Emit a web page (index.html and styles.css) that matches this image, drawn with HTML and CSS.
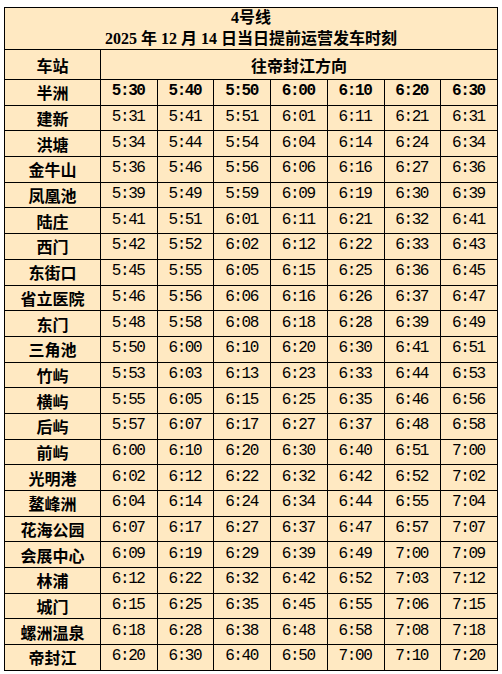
FILE: index.html
```html
<!DOCTYPE html>
<html lang="zh-CN">
<head>
<meta charset="utf-8">
<title>4号线 发车时刻</title>
<link rel="stylesheet" href="styles.css">
</head>
<body>
<div class="page">
<table class="tt">
<colgroup><col class="c-st"><col><col><col><col><col><col><col></colgroup>
<thead>
<tr class="r-title"><th colspan="8"><div>4号线</div><div>2025 年 12 月 14 日当日提前运营发车时刻</div></th></tr>
<tr class="r-head"><th class="st">车站</th><th colspan="7" class="dir">往帝封江方向</th></tr>
</thead>
<tbody>
<tr class="r-first"><th class="st">半洲</th><td>5:30</td><td>5:40</td><td>5:50</td><td>6:00</td><td>6:10</td><td>6:20</td><td>6:30</td></tr>
<tr><th class="st">建新</th><td>5:31</td><td>5:41</td><td>5:51</td><td>6:01</td><td>6:11</td><td>6:21</td><td>6:31</td></tr>
<tr><th class="st">洪塘</th><td>5:34</td><td>5:44</td><td>5:54</td><td>6:04</td><td>6:14</td><td>6:24</td><td>6:34</td></tr>
<tr><th class="st">金牛山</th><td>5:36</td><td>5:46</td><td>5:56</td><td>6:06</td><td>6:16</td><td>6:27</td><td>6:36</td></tr>
<tr><th class="st">凤凰池</th><td>5:39</td><td>5:49</td><td>5:59</td><td>6:09</td><td>6:19</td><td>6:30</td><td>6:39</td></tr>
<tr><th class="st">陆庄</th><td>5:41</td><td>5:51</td><td>6:01</td><td>6:11</td><td>6:21</td><td>6:32</td><td>6:41</td></tr>
<tr><th class="st">西门</th><td>5:42</td><td>5:52</td><td>6:02</td><td>6:12</td><td>6:22</td><td>6:33</td><td>6:43</td></tr>
<tr><th class="st">东街口</th><td>5:45</td><td>5:55</td><td>6:05</td><td>6:15</td><td>6:25</td><td>6:36</td><td>6:45</td></tr>
<tr><th class="st">省立医院</th><td>5:46</td><td>5:56</td><td>6:06</td><td>6:16</td><td>6:26</td><td>6:37</td><td>6:47</td></tr>
<tr><th class="st">东门</th><td>5:48</td><td>5:58</td><td>6:08</td><td>6:18</td><td>6:28</td><td>6:39</td><td>6:49</td></tr>
<tr><th class="st">三角池</th><td>5:50</td><td>6:00</td><td>6:10</td><td>6:20</td><td>6:30</td><td>6:41</td><td>6:51</td></tr>
<tr><th class="st">竹屿</th><td>5:53</td><td>6:03</td><td>6:13</td><td>6:23</td><td>6:33</td><td>6:44</td><td>6:53</td></tr>
<tr><th class="st">横屿</th><td>5:55</td><td>6:05</td><td>6:15</td><td>6:25</td><td>6:35</td><td>6:46</td><td>6:56</td></tr>
<tr><th class="st">后屿</th><td>5:57</td><td>6:07</td><td>6:17</td><td>6:27</td><td>6:37</td><td>6:48</td><td>6:58</td></tr>
<tr><th class="st">前屿</th><td>6:00</td><td>6:10</td><td>6:20</td><td>6:30</td><td>6:40</td><td>6:51</td><td>7:00</td></tr>
<tr><th class="st">光明港</th><td>6:02</td><td>6:12</td><td>6:22</td><td>6:32</td><td>6:42</td><td>6:52</td><td>7:02</td></tr>
<tr><th class="st">鳌峰洲</th><td>6:04</td><td>6:14</td><td>6:24</td><td>6:34</td><td>6:44</td><td>6:55</td><td>7:04</td></tr>
<tr><th class="st">花海公园</th><td>6:07</td><td>6:17</td><td>6:27</td><td>6:37</td><td>6:47</td><td>6:57</td><td>7:07</td></tr>
<tr><th class="st">会展中心</th><td>6:09</td><td>6:19</td><td>6:29</td><td>6:39</td><td>6:49</td><td>7:00</td><td>7:09</td></tr>
<tr><th class="st">林浦</th><td>6:12</td><td>6:22</td><td>6:32</td><td>6:42</td><td>6:52</td><td>7:03</td><td>7:12</td></tr>
<tr><th class="st">城门</th><td>6:15</td><td>6:25</td><td>6:35</td><td>6:45</td><td>6:55</td><td>7:06</td><td>7:15</td></tr>
<tr><th class="st">螺洲温泉</th><td>6:18</td><td>6:28</td><td>6:38</td><td>6:48</td><td>6:58</td><td>7:08</td><td>7:18</td></tr>
<tr><th class="st">帝封江</th><td>6:20</td><td>6:30</td><td>6:40</td><td>6:50</td><td>7:00</td><td>7:10</td><td>7:20</td></tr>
</tbody>
</table>
</div>
</body>
</html>
```

FILE: styles.css
```css
html, body {
  margin: 0;
  padding: 0;
  background: #ffffff;
}

.page {
  padding: 7px 0 0 4px;
}

.tt {
  border-collapse: collapse;
  table-layout: fixed;
  width: 494px;
  background: #ffe9c2;
  color: #000;
}

.c-st {
  width: 96px;
}

.tt th,
.tt td {
  border: 1px solid #000;
  padding: 0;
  text-align: center;
  vertical-align: middle;
}

.r-title th {
  height: 41px;
  font-family: "Liberation Serif", "Noto Sans CJK SC", serif;
  font-weight: 700;
  font-size: 16px;
  line-height: 20.5px;
}

.r-head th {
  height: 29px;
  font-family: "Noto Sans CJK SC", sans-serif;
  font-weight: 700;
  font-size: 16px;
}

.st {
  font-family: "Noto Sans CJK SC", sans-serif;
  font-weight: 700;
  font-size: 16px;
  line-height: 20px;
}

.tt tbody tr {
  height: 25.7px;
}

.tt td {
  font-family: "Liberation Mono", monospace;
  font-size: 16px;
  letter-spacing: -1.4px;
  text-indent: -1.4px;
  line-height: 20px;
  padding-bottom: 2px;
}

.r-first td {
  font-weight: 700;
}
```
